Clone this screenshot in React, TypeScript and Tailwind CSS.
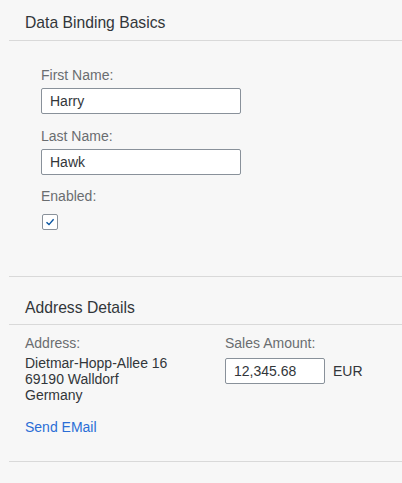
import React from 'react';

const font = "font-['Liberation_Sans',Arial,sans-serif]";

const Label: React.FC<{ children: React.ReactNode }> = ({ children }) => (
  <div className="h-4 text-sm leading-4 text-[#6a6d70]">{children}</div>
);

const TextInput: React.FC<{ value: string; width: string }> = ({ value, width }) => (
  <div
    className={`flex h-[26px] items-center rounded-[2px] border border-[#89919a] bg-white px-2 text-sm text-[#32363a] ${width}`}
  >
    {value}
  </div>
);

const App: React.FC = () => {
  return (
    <div className={`min-h-screen bg-[#f7f7f7] pl-[9px] ${font}`}>
      {/* Data Binding Basics */}
      <div className="border-b border-[#d9d9d9]">
        <div className="border-b border-[#d9d9d9] pb-[9px] pl-4 pt-[15px] text-[15.7px] leading-4 text-[#32363a]">
          Data Binding Basics
        </div>
        <div className="pb-[46px] pl-8 pt-[26px]">
          <Label>First Name:</Label>
          <div className="mt-[5px]">
            <TextInput value="Harry" width="w-[200px]" />
          </div>
          <div className="mt-[14px]">
            <Label>Last Name:</Label>
          </div>
          <div className="mt-[5px]">
            <TextInput value="Hawk" width="w-[200px]" />
          </div>
          <div className="mt-[13px]">
            <Label>Enabled:</Label>
          </div>
          <div className="ml-px mt-[10px] flex h-4 w-4 items-center justify-center rounded-[2px] border border-[#89919a] bg-white">
            <svg width="10" height="10" viewBox="0 0 10 10" fill="none">
              <path d="M1.5 5.2 L4 7.6 L8.6 2.2" stroke="#0854a0" strokeWidth="1.4" />
            </svg>
          </div>
        </div>
      </div>

      {/* Address Details */}
      <div className="border-b border-[#d9d9d9]">
        <div className="border-b border-[#d9d9d9] pb-2 pl-4 pt-[23px] text-[15.7px] leading-4 text-[#32363a]">
          Address Details
        </div>
        <div className="grid grid-cols-[200px_1fr] pb-[26px] pl-4 pt-[10px]">
          <div>
            <Label>Address:</Label>
            <div className="mt-1 text-sm leading-4 text-[#32363a]">
              <div>Dietmar-Hopp-Allee 16</div>
              <div>69190 Walldorf</div>
              <div>Germany</div>
            </div>
            <div className="mt-4 text-sm leading-4 text-[#2b6ed6]">Send EMail</div>
          </div>
          <div>
            <Label>Sales Amount:</Label>
            <div className="mt-[7px] flex items-center gap-2">
              <TextInput value="12,345.68" width="w-[100px]" />
              <span className="text-sm text-[#32363a]">EUR</span>
            </div>
          </div>
        </div>
      </div>
    </div>
  );
};

export default App;
